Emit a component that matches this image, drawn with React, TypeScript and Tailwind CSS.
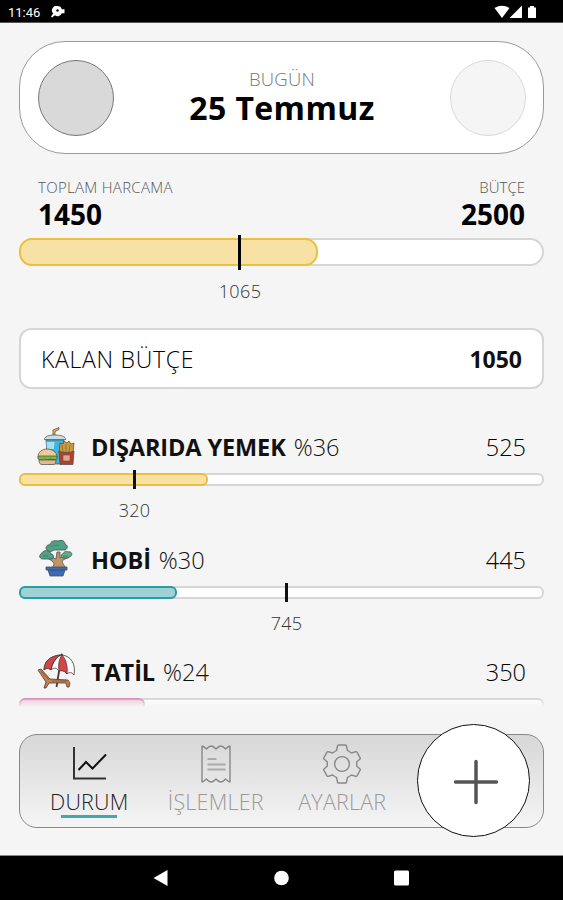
import type { ReactNode } from 'react';

type Category = {
  name: string;
  percent: number;
  amount: number;
  fill: number;
  marker?: { label: number; at: number };
  barClass: string;
  icon: ReactNode;
};

function FastFoodIcon() {
  return (
    <svg width="38" height="40" viewBox="0 0 38 40" stroke="#4a494b" strokeWidth="0.7" strokeLinejoin="round">
      <path d="M16 10V4l6-2.500v2L18 5.500V10z" fill="#f2b233" />
      <path d="M9 14h18l-2.500 24H11z" fill="#3fb4de" />
      <path d="M9.500 16h8l-.5 7h-7z" fill="#a5e0f0" stroke="none" />
      <path d="M7.500 13.500c0-3 4-4.500 10.500-4.500s10.500 1.500 10.500 4.500z" fill="#c9dde6" />
      <path d="M22 27l1-10 3 1 1-3 3 2 2-2 2 3 3-1-1 10z" fill="#c99a3f" />
      <path d="M25 19l1 7M29 18v8M33 19l-1 7" stroke="#85652b" />
      <path d="M22 25c4 2 11 2 15 0l-1 13.500H23z" fill="#b5402a" />
      <path d="M26 29h7v6h-7z" fill="#e0a68b" strokeWidth="0.500" />
      <path d="M1 31c0-5 4-8 9-8s10 3 10 8z" fill="#edc795" />
      <path d="M1 30h19v3l-3 1-3-1-4 1-3-1-3 1-3-1z" fill="#78b943" />
      <path d="M2 34h17c0 3-1 4.500-3 4.500H5c-2 0-3-1.500-3-4.500z" fill="#e3b98a" />
      <path d="M7 27h1M11 26h1M14 28h1" stroke="#fff5dc" />
    </svg>
  );
}

function BonsaiIcon() {
  return (
    <svg width="38" height="38" viewBox="0 0 38 38" stroke="#46544f" strokeWidth="0.800" strokeLinejoin="round">
      <path
        d="M15 29c2-3 3-4 0-7l-6-4 3-1 7 3 1-7h3v6l7-3 2 2-6 3c-2 2 1 5 3 8z"
        fill="#c0936b"
      />
      <path
        d="M10 11c-2-1-1-6 3-5 0-4 5-5 8-4 5-2 7 1 7 3 3 1 3 5 0 6H17l-4 2z"
        fill="#4fa084"
      />
      <path d="M7 12c3-1 6 0 7 3 3 0 3 4 1 5H6c-4 0-4-4-2-5 0-1 2-2 3-3z" fill="#4fa084" />
      <path d="M26 15c1-3 4-3 5-2 3-1 5 2 3 4l-3 2h-5c-3-1-2-4 0-4z" fill="#5fae91" />
      <path d="M14 7c3 1 5-2 8 0M6 17h5M26 17h5" fill="none" stroke="#357a65" />
      <path d="M9 28h21v3h-2l-2 6H13l-2-6H9z" fill="#3f69b0" />
      <path d="M11 31h17" stroke="#2c4a87" />
    </svg>
  );
}

function BeachIcon() {
  return (
    <svg width="38" height="36" viewBox="0 0 38 36" stroke="#4a3b37" strokeWidth="0.800" strokeLinejoin="round">
      <path d="M24.500 3l-5 31" strokeWidth="1.800" />
      <path d="M7 17C7 7 15 2 25 2c9 1 14 9 12 20-2-3-5-3-7-1-2-3-5-4-8-3-2-3-5-4-8-1-2-2-5-2-7 0z" fill="#fafafa" />
      <path d="M7 17C7 8 14 3 23 2c-5 4-8 9-9 15-2-2-5-2-7 0z" fill="#d8434a" />
      <path d="M22 18c-1-6 0-12 3-16 4 4 6 12 5 19-2-3-5-4-8-3z" fill="#d8434a" />
      <path d="M14 17c1-6 4-12 10-15" fill="none" />
      <path
        d="M1 17l3-1 9 10 18 1 2 3-1 4h-2l-1-4H12l-3 5H7l2-6z"
        fill="#c58150"
      />
      <path d="M4 18l8 9M15 28h15" stroke="#88512d" />
      <circle cx="24.700" cy="1.800" r="0.900" fill="#333" />
    </svg>
  );
}

const categories: Category[] = [
  {
    name: 'DIŞARIDA YEMEK',
    percent: 36,
    amount: 525,
    fill: 189,
    marker: { label: 320, at: 115.5 },
    barClass: 'bg-[#f8e1a4] border-[#ecc03c]',
    icon: <FastFoodIcon />,
  },
  {
    name: 'HOBİ',
    percent: 30,
    amount: 445,
    fill: 158,
    marker: { label: 745, at: 267.5 },
    barClass: 'bg-[#a0d2d5] border-[#2b9ca5]',
    icon: <BonsaiIcon />,
  },
  {
    name: 'TATİL',
    percent: 24,
    amount: 350,
    fill: 126,
    barClass: 'bg-[#efc8de] border-[#db8bb9]',
    icon: <BeachIcon />,
  },
];

function StatusBar() {
  return (
    <div className="flex h-[23px] shrink-0 items-center justify-between border-b border-[#555] bg-black pr-[25px] pl-2 text-white">
      <div className="flex items-center gap-2.5 pt-0.5">
        <span className="w-[33px] font-[Roboto] text-[13px] leading-none">11:46</span>
        <svg width="15" height="12" viewBox="0 0 15 12" fill="currentColor">
          <path d="M6.500 0a4.500 4.500 0 0 1 4.300 3.200h2.700v4h-2.700A4.500 4.500 0 0 1 4 9.300L1 11.500 0 10.500l2.200-3A4.500 4.500 0 0 1 6.500 0z" />
          <circle cx="6.500" cy="4.500" r="1.200" fill="#000" />
        </svg>
      </div>
      <svg width="44" height="14" viewBox="0 0 44 14" fill="currentColor" className="mt-0.5">
        <path d="M0.500 3Q8 -1.500 15.500 3L8 13z" />
        <path d="M28 0.500V13H15.500z" />
        <path d="M34 2.500h2V1h4v1.500h2V13h-8z" />
      </svg>
    </div>
  );
}

function DateCard() {
  return (
    <div className="flex h-[113px] items-center justify-between rounded-[46px] border border-[#999] bg-white pr-[17px] pl-[18px]">
      <div className="size-[76px] rounded-full border border-[#777] bg-[#d9d9d9]" />
      <div className="-mt-[3px] flex flex-col items-center">
        <span className="text-[18.500px] leading-6 font-light tracking-[0.2px] text-[#777]">BUGÜN</span>
        <span className="text-[32px] leading-[34px] font-bold tracking-[0.4px] text-black">25 Temmuz</span>
      </div>
      <div className="size-[76px] rounded-full border border-[#d9d9d9] bg-[#f5f5f5]" />
    </div>
  );
}

function Summary() {
  return (
    <section className="mt-[23px]">
      <div className="flex justify-between px-[19px]">
        <div className="flex flex-col">
          <span className="text-[15px] leading-5 font-light tracking-[0.3px] text-[#555]">TOPLAM HARCAMA</span>
          <span className="text-[28px] leading-[34px] font-bold text-black">1450</span>
        </div>
        <div className="flex flex-col items-end">
          <span className="text-[15px] leading-5 font-light text-[#555]">BÜTÇE</span>
          <span className="text-[28px] leading-[34px] font-bold text-black">2500</span>
        </div>
      </div>
      <div className="relative mt-[7px] h-[28px] rounded-[14px] border-2 border-[#d6d6d6] bg-white">
        <div className="absolute -top-0.5 -left-0.5 h-[28px] w-[299px] rounded-[13px] border-2 border-[#ecc03c] bg-[#f8e1a4]" />
        <div className="absolute -top-[5px] left-[217px] h-[35px] w-[3px] bg-black" />
      </div>
      <div className="mt-[13px] flex w-[442px] justify-center text-[18px] leading-6 font-light tracking-[0.4px] text-[#333]">
        1065
      </div>
    </section>
  );
}

function CategoryRow({ category }: { category: Category }) {
  return (
    <div className="h-[112.5px] shrink-0">
      <div className="flex h-[49px] items-center px-[18px] pb-px">
        <div className="-mt-[5px] flex w-[54px] shrink-0 items-center">{category.icon}</div>
        <span className="text-[23.500px] font-bold tracking-[-0.1px] text-[#111]">{category.name}</span>
        <span className="ml-2 text-[23.500px] font-light text-[#111]">%{category.percent}</span>
        <span className="ml-auto text-[23.500px] font-light text-black">{category.amount}</span>
      </div>
      <div className="relative h-[13px] rounded-[6px] border-2 border-[#d6d6d6] bg-white">
        <div
          className={`absolute -top-0.5 -left-0.5 h-[13px] rounded-[6px] border-2 ${category.barClass}`}
          style={{ width: category.fill }}
        />
        {category.marker && (
          <div
            className="absolute -top-[5px] h-[19px] w-[3px] bg-[#111]"
            style={{ left: category.marker.at - 3.5 }}
          />
        )}
      </div>
      {category.marker && (
        <div
          className="mt-3 flex justify-center text-[18px] leading-6 font-light tracking-[0.3px] text-[#333]"
          style={{ width: category.marker.at * 2 }}
        >
          {category.marker.label}
        </div>
      )}
    </div>
  );
}

function ChartIcon() {
  return (
    <svg width="38" height="38" viewBox="0 0 38 38" fill="none">
      <path d="M4 2v31.500H36" stroke="#333" strokeWidth="2" />
      <path d="M8.500 25l7.500-8 6.500 6.500L36 9.500" stroke="#111" strokeWidth="2" />
    </svg>
  );
}

function ReceiptIcon() {
  return (
    <svg width="38" height="38" viewBox="0 0 38 38" fill="none" stroke="#888" strokeWidth="1.400" strokeLinejoin="round">
      <path d="M5 1q2.500 1 4.500 3 2-2.800 4.800-3Q17 1.500 19 4q2-2.500 4.700-3Q26.500 1.200 28.500 4q2-2 4.500-3v36q-2.500-1-4.500-3-2 2.800-4.800 3Q21 36.500 19 34q-2 2.500-4.700 3-2.800-.2-4.800-3-2 2-4.500 3z" />
      <path d="M10.500 14h9M10.500 19.500h18M10.500 24.500h18" stroke="#aaa" strokeWidth="1.800" />
    </svg>
  );
}

function GearIcon() {
  return (
    <svg width="38" height="40" viewBox="0 0 38 40" fill="none" stroke="#888" strokeWidth="1.400" strokeLinejoin="round">
      <path d="M15.500 1h7q.8 0 1 1l1 4.500 4 2.500 4.300-1.300q.8-.2 1.200.5l3.200 5.600q.4.700-.2 1.200L33.700 18v4l3.300 3q.6.500.2 1.200L34 31.800q-.4.700-1.200.5L28.500 31l-4 2.500-1 4.500q-.2 1-1 1h-7q-.8 0-1-1l-1-4.500-4-2.500-4.300 1.300q-.8.200-1.200-.5L.8 26.200Q.4 25.500 1 25l3.300-3v-4L1 15q-.6-.5-.2-1.200L4 8.200q.4-.7 1.200-.5L9.500 9l4-2.500 1-4.500q.2-1 1-1z" />
      <circle cx="19" cy="20" r="7.400" />
    </svg>
  );
}

function NavItem({ label, active, icon }: { label: string; active?: boolean; icon: ReactNode }) {
  return (
    <div className="flex w-[126.5px] flex-col items-center pt-[9px]">
      <div className="flex h-10 items-center">{icon}</div>
      <span
        className={`mt-1 text-[21.5px] leading-7 font-light tracking-[0.2px] ${active ? 'text-[#222]' : 'text-[#999]'}`}
      >
        {label}
      </span>
      {active && <div className="-mt-px h-[3px] w-[56px] bg-[#43a8ac]" />}
    </div>
  );
}

function BottomNav() {
  return (
    <nav className="relative flex h-[94px] shrink-0 rounded-[18px] border border-[#888] bg-linear-to-b from-[#d7d7d7] to-[#f5f5f5] pl-[6px]">
      <NavItem label="DURUM" active icon={<ChartIcon />} />
      <NavItem label="İŞLEMLER" icon={<ReceiptIcon />} />
      <NavItem label="AYARLAR" icon={<GearIcon />} />
      <button className="absolute -top-[11px] right-[13px] flex size-[113px] items-center justify-center rounded-full border-[1.5px] border-[#111] bg-white">
        <svg width="46" height="46" viewBox="0 0 46 46" className="mt-[3px] ml-1" stroke="#555" strokeWidth="3.500" strokeLinecap="round">
          <path d="M23 2.500v41M2.500 23h41" />
        </svg>
      </button>
    </nav>
  );
}

function SystemBar() {
  return (
    <div className="flex h-[45px] shrink-0 items-center justify-center border-t border-[#888] bg-black">
      <svg width="257" height="16" viewBox="0 0 257 16" fill="#fff">
        <path d="M0.500 8L14.500 0v16z" />
        <circle cx="128.500" cy="8" r="7.300" />
        <rect x="241" y="0.500" width="15" height="15" rx="1.500" />
      </svg>
    </div>
  );
}

export default function App() {
  return (
    <div className="flex h-[900px] w-[563px] flex-col overflow-hidden bg-[#f5f5f5] font-['Open_Sans',sans-serif]">
      <StatusBar />
      <main className="flex min-h-0 flex-1 flex-col px-[19px] pt-[18px]">
        <DateCard />
        <Summary />
        <div className="mt-[25px] flex h-[61px] shrink-0 items-center justify-between rounded-xl border-2 border-[#d6d6d6] bg-white px-5 pt-px">
          <span className="text-[23px] font-light tracking-[0.7px] text-black">KALAN BÜTÇE</span>
          <span className="text-[23px] font-bold text-[#111]">1050</span>
        </div>
        <div className="relative mt-[35px] h-[283px] shrink-0 overflow-hidden">
          {categories.map((category) => (
            <CategoryRow key={category.name} category={category} />
          ))}
          <div className="absolute inset-x-0 bottom-0 h-[9px] bg-linear-to-b from-[#f5f5f5]/0 to-[#f5f5f5]" />
        </div>
        <div className="mt-[27px]">
          <BottomNav />
        </div>
      </main>
      <SystemBar />
    </div>
  );
}
